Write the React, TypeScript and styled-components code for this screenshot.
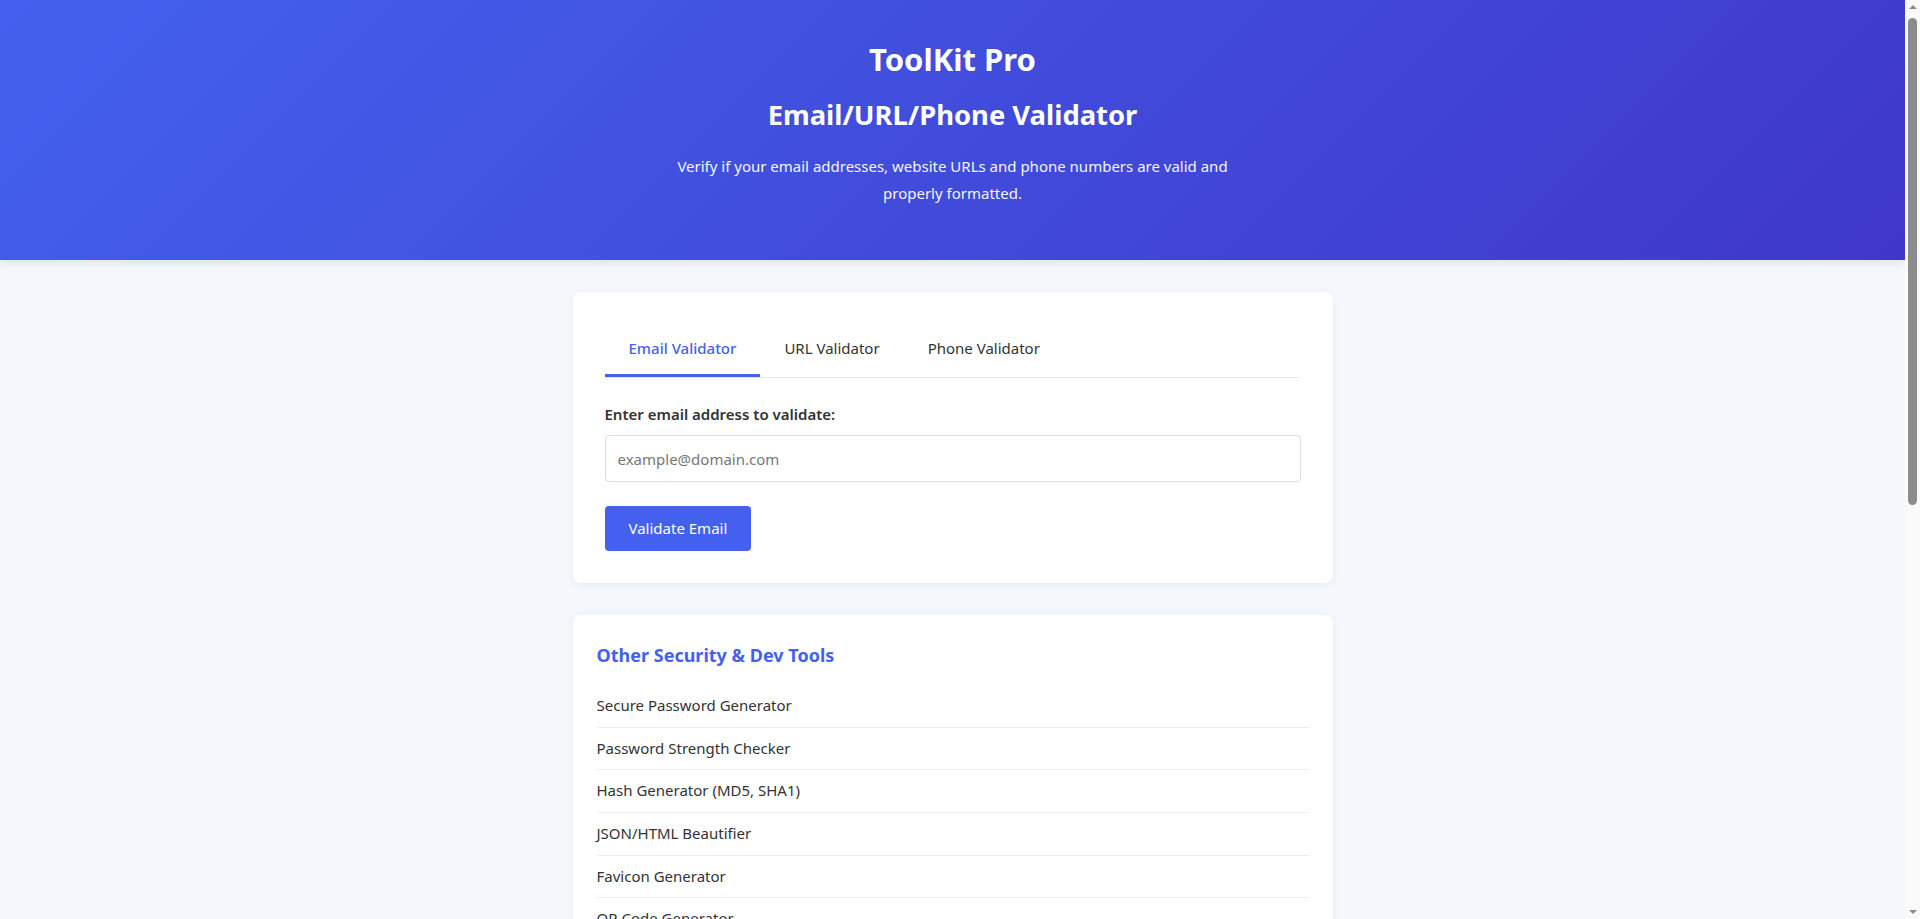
import React, { useState } from 'react';
import styled, { createGlobalStyle } from 'styled-components';

const GlobalStyle = createGlobalStyle`
  * {
    box-sizing: border-box;
  }
  body {
    margin: 0 15px 0 0;
    background: #f4f7fc;
    color: #333;
    font-family: 'Segoe UI', 'Noto Sans', sans-serif;
    line-height: 1.6;
  }
`;

// the browser hides its own scrollbar when photographing, so the rail is drawn
const ScrollRail = styled.div`
  position: fixed;
  top: 0;
  right: 0;
  bottom: 0;
  width: 15px;
  background: #fafafa;
  z-index: 10;
`;

const RailArrow = styled.span<{ $down?: boolean }>`
  position: absolute;
  left: 3.5px;
  ${({ $down }) => ($down ? 'bottom: 5px;' : 'top: 5px;')}
  width: 0;
  height: 0;
  border-left: 4px solid transparent;
  border-right: 4px solid transparent;
  ${({ $down }) => ($down ? 'border-top' : 'border-bottom')}: 4px solid #8c8c8c;
`;

const RailThumb = styled.span`
  position: absolute;
  top: 18px;
  left: 3px;
  width: 9px;
  height: 487px;
  border-radius: 5px;
  background: #8c8c8c;
`;

const Header = styled.header`
  background: linear-gradient(135deg, #4361ee 0%, #3f37c9 100%);
  color: #fff;
  text-align: center;
  padding: 40px 20px 54px;
  box-shadow: 0 2px 10px rgba(0, 0, 0, 0.1);
`;

const Brand = styled.h1`
  margin: 0;
  font-size: 31px;
  line-height: 38px;
  font-weight: 700;
`;

const PageTitle = styled.h2`
  margin: 20px 0 0;
  font-size: 27.4px;
  line-height: 34px;
  font-weight: 700;
`;

const Lead = styled.p`
  margin: 21px auto 0;
  max-width: 600px;
  font-size: 15px;
  line-height: 26.5px;
  opacity: 0.95;
`;

const Main = styled.main`
  max-width: 800px;
  margin: 32px auto;
  padding: 0 20px;
`;

const Card = styled.section<{ $pad: number }>`
  background: #fff;
  border-radius: 8px;
  box-shadow: 0 2px 10px rgba(0, 0, 0, 0.05);
  padding: ${({ $pad }) => $pad}px;
  margin-bottom: 32px;
`;

const Tabs = styled.div`
  display: flex;
  border-bottom: 1px solid #e8e8e8;
  margin-bottom: 24px;
`;

const Tab = styled.button<{ $active?: boolean }>`
  background: none;
  border: none;
  border-bottom: 3px solid ${({ $active }) => ($active ? '#4361ee' : 'transparent')};
  padding: 12px 24px;
  font-family: inherit;
  font-size: 15px;
  line-height: 25.6px;
  font-weight: ${({ $active }) => ($active ? 500 : 400)};
  color: ${({ $active }) => ($active ? '#4361ee' : '#333')};
  cursor: pointer;
`;

const Label = styled.label`
  display: block;
  margin-bottom: 8px;
  font-size: 15px;
  line-height: 25.6px;
  font-weight: 600;
  color: #333;
`;

const Input = styled.input`
  display: block;
  width: 100%;
  height: 47px;
  padding: 0 12px;
  border: 1px solid #ddd;
  border-radius: 4px;
  font-family: inherit;
  font-size: 15px;
  color: #333;
  outline: none;
  &::placeholder {
    color: #777;
  }
`;

const Button = styled.button`
  margin-top: 24px;
  padding: 12px 24px;
  background: #4361ee;
  color: #fff;
  border: none;
  border-radius: 4px;
  font-family: inherit;
  font-size: 15px;
  line-height: 21px;
  cursor: pointer;
`;

const SectionTitle = styled.h3`
  margin: 0 0 14px;
  font-size: 18px;
  line-height: 32px;
  font-weight: 700;
  color: #4361ee;
`;

const ToolList = styled.ul`
  list-style: none;
  margin: 0;
  padding: 0;
`;

const ToolItem = styled.li`
  padding: 8px 0;
  border-bottom: 1px solid #eee;
  font-size: 15px;
  line-height: 25.6px;
  a {
    color: #333;
    text-decoration: none;
  }
`;

const Footer = styled.footer`
  text-align: center;
  padding: 24px 20px;
  font-size: 14px;
  color: #777;
`;

const tabs = [
  { id: 'email', name: 'Email Validator', label: 'Enter email address to validate:', hint: 'example@domain.com', action: 'Validate Email' },
  { id: 'url', name: 'URL Validator', label: 'Enter URL to validate:', hint: 'https://www.example.com', action: 'Validate URL' },
  { id: 'phone', name: 'Phone Validator', label: 'Enter phone number to validate:', hint: '+1 555 123 4567', action: 'Validate Phone' }
];

const tools = [
  'Secure Password Generator',
  'Password Strength Checker',
  'Hash Generator (MD5, SHA1)',
  'JSON/HTML Beautifier',
  'Favicon Generator',
  'QR Code Generator',
  'Base64 Encoder/Decoder',
  'URL Encoder/Decoder'
];

export const App: React.FC = () => {
  const [active, setActive] = useState('email');
  const current = tabs.find((t) => t.id === active) || tabs[0];

  return (
    <>
      <GlobalStyle />
      <Header>
        <Brand>ToolKit Pro</Brand>
        <PageTitle>Email/URL/Phone Validator</PageTitle>
        <Lead>
          Verify if your email addresses, website URLs and phone numbers are valid and properly
          formatted.
        </Lead>
      </Header>
      <Main>
        <Card $pad={32}>
          <Tabs>
            {tabs.map((t) => (
              <Tab key={t.id} $active={t.id === active} onClick={() => setActive(t.id)}>
                {t.name}
              </Tab>
            ))}
          </Tabs>
          <Label htmlFor={'value'}>{current.label}</Label>
          <Input id={'value'} type={'text'} placeholder={current.hint} />
          <Button type={'button'}>{current.action}</Button>
        </Card>
        <Card $pad={24}>
          <SectionTitle>Other Security &amp; Dev Tools</SectionTitle>
          <ToolList>
            {tools.map((name) => (
              <ToolItem key={name}>
                <a href={'#'}>{name}</a>
              </ToolItem>
            ))}
          </ToolList>
        </Card>
      </Main>
      <Footer>© 2024 ToolKit Pro. All rights reserved.</Footer>
      <ScrollRail aria-hidden={true}>
        <RailArrow />
        <RailThumb />
        <RailArrow $down={true} />
      </ScrollRail>
    </>
  );
};

export default App;
